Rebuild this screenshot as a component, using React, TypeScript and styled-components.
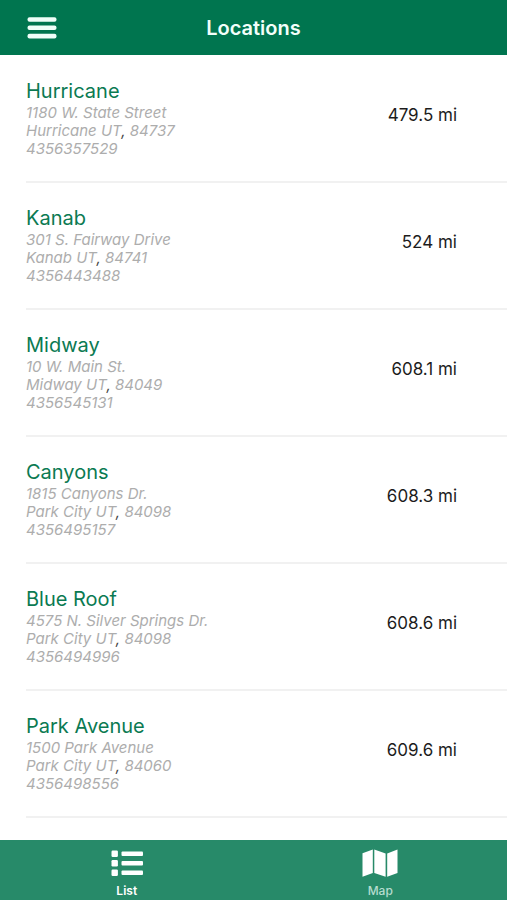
import React, { useState } from "react";
import styled, { createGlobalStyle } from "styled-components";

const GlobalStyle = createGlobalStyle`
  * { box-sizing: border-box; }
  body {
    margin: 0;
    background: #ffffff;
    font-family: Inter, "Liberation Sans", sans-serif;
  }
`;

const Screen = styled.div`
  display: flex;
  flex-direction: column;
  min-height: 100vh;
`;

const Header = styled.header`
  position: sticky;
  top: 0;
  display: grid;
  grid-template-columns: 60px 1fr 60px;
  align-items: center;
  height: 55px;
  padding: 0 12px;
  background: #00754f;
`;

const MenuButton = styled.button`
  display: flex;
  justify-content: center;
  padding: 8px 0;
  border: 0;
  background: none;
  color: #effff9;
  cursor: pointer;
`;

const Title = styled.h1`
  margin: 0;
  color: #f2fffa;
  font-size: 20px;
  line-height: 24px;
  font-weight: 600;
  text-align: center;
`;

const List = styled.ul`
  flex: 1;
  margin: 0;
  padding: 1px 0 0 26px;
  list-style: none;
`;

const Row = styled.li`
  display: flex;
  justify-content: space-between;
  height: 127px;
  padding: 23px 50px 0 0;
  border-bottom: 2px solid #f1f1f1;
`;

const Name = styled.h2`
  margin: 0;
  color: #0b7a52;
  font-size: 20px;
  line-height: 25px;
  font-weight: 400;
`;

const Address = styled.address`
  color: #adadad;
  font-size: 15px;
  line-height: 18px;
  font-style: italic;
`;

const Line = styled.div``;

const Comma = styled.span`
  color: #444444;
`;

const Distance = styled.div`
  padding-top: 25px;
  color: #1c1c1c;
  font-size: 17px;
  line-height: 22px;
  white-space: nowrap;
`;

const TabBar = styled.nav`
  position: sticky;
  bottom: 0;
  display: flex;
  height: 60px;
  background: #278a69;
`;

const Tab = styled.button<{ $active: boolean }>`
  flex: 1;
  display: flex;
  flex-direction: column;
  align-items: center;
  gap: 5px;
  padding: 8px 0 0;
  border: 0;
  background: none;
  color: ${(p) => (p.$active ? "#ffffff" : "#b5dccf")};
  font-family: inherit;
  font-size: 12px;
  line-height: 15px;
  font-weight: ${(p) => (p.$active ? 600 : 500)};
  cursor: pointer;
`;

const locations = [
  { name: "Hurricane", street: "1180 W. State Street", city: "Hurricane UT", zip: "84737", phone: "4356357529", distance: "479.5 mi" },
  { name: "Kanab", street: "301 S. Fairway Drive", city: "Kanab UT", zip: "84741", phone: "4356443488", distance: "524 mi" },
  { name: "Midway", street: "10 W. Main St.", city: "Midway UT", zip: "84049", phone: "4356545131", distance: "608.1 mi" },
  { name: "Canyons", street: "1815 Canyons Dr.", city: "Park City UT", zip: "84098", phone: "4356495157", distance: "608.3 mi" },
  { name: "Blue Roof", street: "4575 N. Silver Springs Dr.", city: "Park City UT", zip: "84098", phone: "4356494996", distance: "608.6 mi" },
  { name: "Park Avenue", street: "1500 Park Avenue", city: "Park City UT", zip: "84060", phone: "4356498556", distance: "609.6 mi" },
];

const MenuIcon = () => (
  <svg width="30" height="22" viewBox="0 0 30 22" fill="currentColor" aria-hidden="true">
    <rect x="0.5" y="0.2" width="29" height="4.6" rx="2" />
    <rect x="0.5" y="8.5" width="29" height="4.6" rx="2" />
    <rect x="0.5" y="16.8" width="29" height="4.6" rx="2" />
  </svg>
);

const ListIcon = () => (
  <svg width="32" height="30" viewBox="0 0 32 30" fill="#ffffff" aria-hidden="true">
    {[2.5, 12, 21.5].map((y) => (
      <g key={y}>
        <rect x="0.5" y={y} width="6.4" height="6.4" rx="1.2" />
        <rect x="10.5" y={y + 1} width="21.5" height="4.4" rx="1" />
      </g>
    ))}
  </svg>
);

const MapIcon = () => (
  <svg width="36" height="30" viewBox="0 0 36 30" fill="#ffffff" aria-hidden="true">
    <path d="M0.5 5.2 10.8 1.6V25L0.5 28.8Z" />
    <path d="M12.3 1.6 23.6 5.4V28.8L12.3 25Z" />
    <path d="M25.2 5.4 35.5 1.6V25L25.2 28.8Z" />
  </svg>
);

export default function App() {
  const [tab, setTab] = useState("list");
  return (
    <>
      <GlobalStyle />
      <Screen>
        <Header>
          <MenuButton aria-label="Menu">
            <MenuIcon />
          </MenuButton>
          <Title>Locations</Title>
        </Header>
        <List>
          {locations.map((l) => (
            <Row key={l.name}>
              <div>
                <Name>{l.name}</Name>
                <Address>
                  <Line>{l.street}</Line>
                  <Line>
                    {l.city}
                    <Comma>,</Comma> {l.zip}
                  </Line>
                  <Line>{l.phone}</Line>
                </Address>
              </div>
              <Distance>{l.distance}</Distance>
            </Row>
          ))}
        </List>
        <TabBar>
          <Tab $active={tab === "list"} onClick={() => setTab("list")}>
            <ListIcon />
            List
          </Tab>
          <Tab $active={tab === "map"} onClick={() => setTab("map")}>
            <MapIcon />
            Map
          </Tab>
        </TabBar>
      </Screen>
    </>
  );
}
